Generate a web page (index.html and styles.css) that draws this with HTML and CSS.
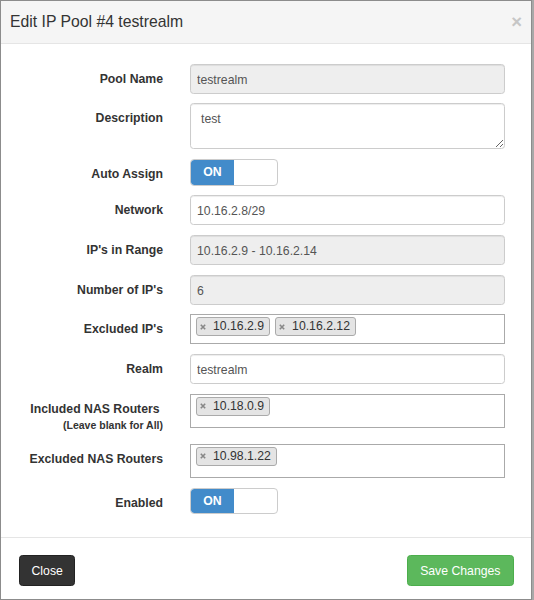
FILE: index.html
```html
<!DOCTYPE html>
<html>
<head>
<meta charset="utf-8">
<title>Edit IP Pool</title>
<link rel="stylesheet" href="styles.css">
</head>
<body>
<div class="modal">
  <div class="modal-header">
    <h4 class="modal-title">Edit IP Pool #4 testrealm</h4>
    <button class="close" type="button">×</button>
  </div>
  <div class="modal-body">
    <form class="form">
      <label class="lbl">Pool Name</label>
      <input class="input ro" type="text" value="testrealm" readonly>

      <label class="lbl">Description</label>
      <textarea class="input area">test</textarea>

      <label class="lbl">Auto Assign</label>
      <div class="switch"><span class="on">ON</span><span class="off"></span></div>

      <label class="lbl">Network</label>
      <input class="input" type="text" value="10.16.2.8/29">

      <label class="lbl">IP's in Range</label>
      <input class="input ro" type="text" value="10.16.2.9 - 10.16.2.14" readonly>

      <label class="lbl">Number of IP's</label>
      <input class="input ro" type="text" value="6" readonly>

      <label class="lbl">Excluded IP's</label>
      <div class="tags">
        <span class="tag"><svg class="tx" width="6" height="6" viewBox="0 0 6 6"><path d="M0.8 0.8L5.2 5.2M5.2 0.8L0.8 5.2"/></svg>10.16.2.9</span>
        <span class="tag"><svg class="tx" width="6" height="6" viewBox="0 0 6 6"><path d="M0.8 0.8L5.2 5.2M5.2 0.8L0.8 5.2"/></svg>10.16.2.12</span>
      </div>

      <label class="lbl">Realm</label>
      <input class="input" type="text" value="testrealm">

      <label class="lbl lbl-tall">Included NAS Routers&nbsp;<small class="hint">(Leave blank for All)</small></label>
      <div class="tags tags-tall">
        <span class="tag"><svg class="tx" width="6" height="6" viewBox="0 0 6 6"><path d="M0.8 0.8L5.2 5.2M5.2 0.8L0.8 5.2"/></svg>10.18.0.9</span>
      </div>

      <label class="lbl">Excluded NAS Routers</label>
      <div class="tags tags-tall">
        <span class="tag"><svg class="tx" width="6" height="6" viewBox="0 0 6 6"><path d="M0.8 0.8L5.2 5.2M5.2 0.8L0.8 5.2"/></svg>10.98.1.22</span>
      </div>

      <label class="lbl">Enabled</label>
      <div class="switch"><span class="on">ON</span><span class="off"></span></div>
    </form>
  </div>
  <div class="modal-footer">
    <button class="btn btn-dark" type="button">Close</button>
    <button class="btn btn-green" type="button">Save Changes</button>
  </div>
</div>
</body>
</html>
```
FILE: styles.css
```css
html, body {
  margin: 0;
  padding: 0;
}
body {
  background: #a8a8a8;
  font-family: "Liberation Sans", Arial, sans-serif;
  font-size: 12.25px;
  color: #333;
}
.modal {
  width: 532px;
  height: 600px;
  box-sizing: border-box;
  background: #fff;
  border: 1px solid #8c8c8c;
  display: flex;
  flex-direction: column;
  overflow: hidden;
}
.modal-header {
  height: 42px;
  flex: none;
  background: #f5f5f5;
  border-bottom: 1px solid #e5e5e5;
  display: flex;
  align-items: center;
  justify-content: space-between;
  padding: 0 9px;
}
.modal-title {
  margin: 0;
  font-size: 15.75px;
  font-weight: normal;
  line-height: 22px;
  color: #333;
}
.close {
  border: 0;
  background: none;
  padding: 0;
  font-family: "Liberation Sans", Arial, sans-serif;
  font-size: 18.5px;
  font-weight: bold;
  line-height: 1;
  color: #c6c6c6;
}
.modal-body {
  flex: none;
  padding: 19.7px 26px 23px 0;
}
.form {
  margin: 0;
  display: grid;
  grid-template-columns: 162px 315px;
  column-gap: 27px;
  row-gap: 9.7px;
  align-items: start;
}
.lbl {
  text-align: right;
  font-weight: bold;
  line-height: 17.5px;
  padding-top: 7px;
}
.lbl-tall {
  padding-bottom: 2px;
}
.hint {
  display: block;
  font-size: 10.5px;
  line-height: 14px;
  font-weight: bold;
}
.input {
  box-sizing: border-box;
  width: 315px;
  height: 30px;
  margin: 0;
  border: 1px solid #ccc;
  border-radius: 3.5px;
  padding: 7px 6px 5px;
  font-family: "Liberation Sans", Arial, sans-serif;
  font-size: 12.25px;
  color: #555;
  background: #fff;
  box-shadow: inset 0 1px 1px rgba(0,0,0,.075);
  outline: none;
}
.ro {
  background: #eee;
}
.area {
  height: 46px;
  padding: 7px 10px;
  line-height: 17.5px;
  display: block;
}
.switch {
  box-sizing: border-box;
  width: 88px;
  height: 26.5px;
  border: 1px solid #ccc;
  border-radius: 4px;
  display: flex;
  overflow: hidden;
  background: #fff;
}
.switch .on {
  width: 43px;
  background: #428bca;
  color: #fff;
  font-weight: bold;
  display: flex;
  align-items: center;
  justify-content: center;
  border-radius: 3px 0 0 3px;
}
.switch .off {
  flex: 1;
}
.tags {
  box-sizing: border-box;
  width: 315px;
  height: 30px;
  border: 1px solid #aaa;
  display: flex;
  flex-wrap: wrap;
  align-items: flex-start;
  align-content: flex-start;
  padding: 2px 0 0;
  background: #fff;
}
.tags-tall {
  height: 34.4px;
}
.tag {
  box-sizing: border-box;
  height: 19px;
  margin-left: 5px;
  display: inline-flex;
  align-items: center;
  border: 1px solid #aaa;
  border-radius: 3px;
  background: #e4e4e4;
  padding: 0 5px 0 3px;
  color: #333;
  font-size: 12.25px;
  line-height: 17px;
}
.tx {
  margin-right: 7px;
  flex: none;
}
.tx path {
  stroke: #888;
  stroke-width: 1.6;
  fill: none;
}
.modal-footer {
  flex: none;
  border-top: 1px solid #e5e5e5;
  padding: 17px 17px 0 18px;
  display: flex;
  justify-content: space-between;
  align-items: flex-start;
}
.btn {
  box-sizing: border-box;
  height: 30.5px;
  padding: 0 11.5px;
  border: 1px solid transparent;
  border-radius: 3.5px;
  font-family: "Liberation Sans", Arial, sans-serif;
  font-size: 12.25px;
  color: #fff;
  line-height: 1;
}
.btn-dark {
  background: #333;
  border-color: #222;
}
.btn-green {
  background: #5cb85c;
  border-color: #4cae4c;
  padding: 0 12.5px;
}
```
